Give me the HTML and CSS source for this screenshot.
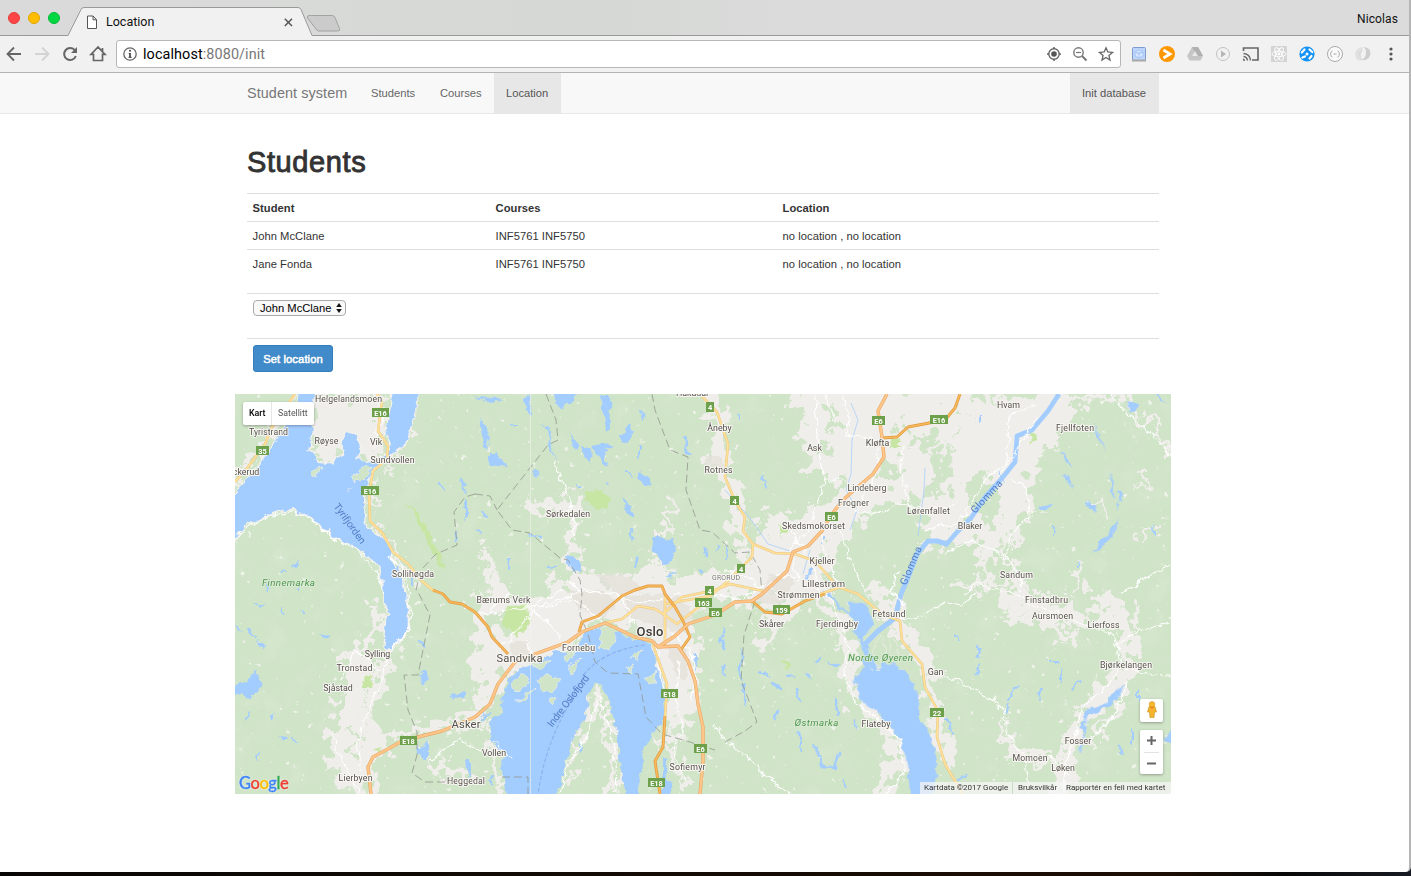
FILE: index.html
```html
<!DOCTYPE html>
<html lang="no">
<head>
<meta charset="utf-8">
<title>Location</title>
<link rel="stylesheet" href="styles.css">
</head>
<body>
<div class="window">
  <header class="tabbar">
    <div class="lights"><i class="red"></i><i class="amber"></i><i class="green"></i></div>
    <div class="tab">
      <svg class="tab-shape" width="280" height="36" viewBox="0 0 280 36"><path d="M0 35.5H4L17 9.5Q18 7.5 20 7.5H234Q236 7.500 237 9.500L248 35.500H280V36H0Z" fill="#f1f1f1"/><path d="M0 35.500H4L17 9.500Q18 7.500 20 7.500H234Q236 7.500 237 9.500L248 35.500H280" fill="none" stroke="#999"/><path d="M247.500 15.500H268Q270 15.500 271 17.500L275.500 28.500Q276.500 31 273.500 31H255Q253 31 252 29L243.500 18Q243 15.500 245 15.500Z" fill="#cbcbcb" stroke="#a2a2a2"/></svg>
      <div class="tab-content">
        <svg width="12" height="15" viewBox="0 0 12 15"><path d="M1.500 1H7L10.500 4.500V13.500H1.500ZM7 1V4.800H10.500" fill="#fff" stroke="#555"/></svg>
        <span>Location</span>
        <svg class="close" width="9" height="9" viewBox="0 0 9 9"><path d="M.8.800 8 8M8 .8.800 8" stroke="#555" stroke-width="1.500"/></svg>
      </div>
    </div>
    <span class="profile">Nicolas</span>
  </header>
  <div class="toolbar">
    <div class="nav-icons">
      <svg viewBox="0 0 28 28"><path d="M21 14H8M14 7.500 7.500 14 14 20.500" fill="none" stroke="#666" stroke-width="1.800"/></svg>
      <svg viewBox="0 0 28 28"><path d="M7 14H20M14 7.500 20.500 14 14 20.500" fill="none" stroke="#d3d3d3" stroke-width="1.800"/></svg>
      <svg viewBox="0 0 28 28"><path d="M19 10.500A6 6 0 1 0 19.800 16" fill="none" stroke="#666" stroke-width="2"/><path d="M21 7V13H15Z" fill="#666"/></svg>
      <svg viewBox="0 0 28 28"><path d="M14 7 7 14.300H9.500V20.500H18.500V14.300H21ZM18.500 8V11" fill="none" stroke="#666" stroke-width="1.700"/></svg>
    </div>
    <div class="address">
      <svg width="14" height="14" viewBox="0 0 14 14"><circle cx="7" cy="7" r="6.200" fill="none" stroke="#666" stroke-width="1.300"/><path d="M7 6V10.500" fill="none" stroke="#444" stroke-width="1.700"/><path d="M5.700 6.500H7M5.500 10.300H8.700" stroke="#444" stroke-width="1"/><circle cx="7" cy="3.800" r="1" fill="#444"/></svg>
      <span class="url">localhost<em>:8080/init</em></span>
      <div class="address-icons">
        <svg viewBox="0 0 26 26"><circle cx="13" cy="13" r="5.200" fill="none" stroke="#666" stroke-width="1.400"/><circle cx="13" cy="13" r="2.800" fill="#555"/><path d="M13 6V8M13 18V20M6 13H8M18 13H20" stroke="#666" stroke-width="1.500"/></svg>
        <svg viewBox="0 0 26 26"><circle cx="11.500" cy="11.500" r="4.700" fill="none" stroke="#777" stroke-width="1.400"/><path d="M15 15 19.500 19.500" stroke="#777" stroke-width="2"/><path d="M9 11.500H14" stroke="#777" stroke-width="1.200"/></svg>
        <svg viewBox="0 0 26 26"><path d="M13 6.800 14.800 11 19.500 11.400 15.900 14.400 17 19 13 16.500 9 19 10.100 14.400 6.500 11.400 11.200 11Z" fill="none" stroke="#666" stroke-width="1.300"/></svg>
      </div>
    </div>
    <div class="extensions">
      <svg viewBox="0 0 28 28"><rect x="7.500" y="7.500" width="13" height="13" rx="1" fill="#bdd5fb" stroke="#7f9dcb"/><path d="M7 20.500H21" stroke="#a7a7a7" stroke-width="2"/><path d="M14 10 18 12V16L14 18 10 16V12ZM10 12 14 14 18 12M14 14V18" fill="#d9e8ff" stroke="#9bbff2" stroke-width=".8"/></svg>
      <svg viewBox="0 0 28 28"><circle cx="14" cy="14" r="8" fill="#ff9800"/><path d="M10.500 10 17 14 10.500 18" fill="none" stroke="#fff" stroke-width="2.800"/></svg>
      <svg viewBox="0 0 28 28"><path d="M11 7H17L22 16 19.500 20.500H8.500L6 16Z" fill="#c6c6c6"/><path d="M11 7H17L22 16H16Z" fill="#b0b0b0"/><path d="M14 11 17 16H11Z" fill="#e8e8e8"/></svg>
      <svg viewBox="0 0 28 28"><circle cx="14" cy="14" r="6.500" fill="none" stroke="#c2c2c2"/><path d="M12 10.500 17 14 12 17.500Z" fill="#b5b5b5"/></svg>
      <svg viewBox="0 0 28 28"><path d="M6.500 11V8H21V20H15" fill="none" stroke="#666" stroke-width="1.600"/><path d="M6.500 13.500Q13 14 13.500 20.500M6.500 16.500Q10 17 10.500 20.500" fill="none" stroke="#666" stroke-width="1.400"/><path d="M6 18.500Q8 19 8.200 20.800H6Z" fill="#666"/></svg>
      <svg viewBox="0 0 28 28"><rect x="6" y="6" width="16" height="16" fill="#d4d4d4"/><g fill="none" stroke="#fff" stroke-width=".9"><ellipse cx="14" cy="14" rx="7" ry="2.700"/><ellipse cx="14" cy="14" rx="7" ry="2.700" transform="rotate(60 14 14)"/><ellipse cx="14" cy="14" rx="7" ry="2.700" transform="rotate(120 14 14)"/></g><circle cx="14" cy="14" r="1.400" fill="#fff"/></svg>
      <svg viewBox="0 0 28 28"><circle cx="14" cy="14" r="7.600" fill="#1492f5"/><circle cx="14" cy="14" r="1.500" fill="#fff"/><path d="M8.800 12.500 11.500 9.500M16.500 9.500 19.300 12M9.500 17.500 12 16.500M16.500 18.500 18.500 16" stroke="#fff" stroke-width="2.200" stroke-linecap="round"/></svg>
      <svg viewBox="0 0 28 28"><circle cx="14" cy="14" r="7.500" fill="#fafafa" stroke="#aaa"/><path d="M11.500 11Q10 11 10 12.500T9 14Q10 14 10 15.500T11.500 17M16.500 11Q18 11 18 12.500T19 14Q18 14 18 15.500T16.500 17M12.500 14H15.500" fill="none" stroke="#aaa"/></svg>
      <svg viewBox="0 0 28 28"><path d="M15 7Q7 7 6 14 7 20 11 21 7 14 15 7Z" fill="#e0e0e0"/><path d="M15 7Q22 8 21.500 14 20 21 12 20 17 18 17 13 17 9 15 7Z" fill="#cecece"/><path d="M13 10Q9 14 12 20" fill="none" stroke="#dadada" stroke-width="2"/></svg>
      <svg viewBox="0 0 28 28"><g fill="#555"><circle cx="14" cy="9" r="1.600"/><circle cx="14" cy="14" r="1.600"/><circle cx="14" cy="19" r="1.600"/></g></svg>
    </div>
  </div>
  <nav class="navbar">
    <div class="container nav-inner">
      <span class="brand">Student system</span>
      <a class="link-students">Students</a><a class="link-courses">Courses</a><a class="active">Location</a>
      <a class="active init">Init database</a>
    </div>
  </nav>
  <main class="container">
    <section class="content">
      <h1>Students</h1>
      <table>
        <colgroup><col class="c1"><col class="c2"><col></colgroup>
        <tr><th>Student</th><th>Courses</th><th>Location</th></tr>
        <tr><td>John McClane</td><td>INF5761 INF5750</td><td>no location , no location</td></tr>
        <tr><td>Jane Fonda</td><td>INF5761 INF5750</td><td>no location , no location</td></tr>
      </table>
      <div class="form-row select-row"><div class="select"><span>John McClane</span><svg width="6" height="10" viewBox="0 0 6 10"><path d="M3 0 5.800 4H.2ZM3 10 .2 6H5.800Z" fill="#111"/></svg></div></div>
      <div class="form-row"><button>Set location</button></div>
    </section>
    <div class="map">
<svg class="map-art" viewBox="235 394 936 400" width="936" height="400">
<defs>
  <filter id="rough" x="0" y="0" width="100%" height="100%"><feTurbulence type="fractalNoise" baseFrequency=".11" numOctaves="3" seed="4"/><feDisplacementMap in="SourceGraphic" scale="9" xChannelSelector="R" yChannelSelector="G"/></filter>
  <filter id="ragged" filterUnits="userSpaceOnUse" x="200" y="360" width="1000" height="460"><feTurbulence type="fractalNoise" baseFrequency=".075" numOctaves="4" seed="9"/><feDisplacementMap in="SourceGraphic" scale="42" xChannelSelector="R" yChannelSelector="G"/></filter>
  <filter id="specks" x="0" y="0" width="100%" height="100%"><feTurbulence type="fractalNoise" baseFrequency=".13" numOctaves="3" seed="21"/><feColorMatrix values="0 0 0 0 .93  0 0 0 0 .93  0 0 0 0 .89  10 0 0 0 -7.300"/></filter>
  <filter id="relief" x="0" y="0" width="100%" height="100%"><feTurbulence type="fractalNoise" baseFrequency=".035" numOctaves="4" seed="2"/><feColorMatrix values="0 0 0 0 .73  0 0 0 0 .84  0 0 0 0 .69  5 0 0 0 -2.800"/></filter>
  <path id="minor" d="M295 394 272 427 265 444 248 467 235 482M377 394 382 401 378 431 388 446 387 459 373 471 369 494 370 521 383 534 393 552 408 564 422 581 435 592M700 394 717 412 728 444 725 477 735 501 745 517 743 531 753 544 752 557 728 581 710 596 665 604M753 544 775 553 795 554 815 561 838 587 858 594 882 614 900 621 902 641 922 664 925 687 938 711 937 737 945 764 955 781 963 794M605 623 622 619 638 606 655 609 663 614 682 597 715 590 730 584 763 591M665 594V645M663 614 677 624 700 606M653 645 667 684 665 717M820 594 838 588"/>
  <path id="trunk" d="M882 438 897 437 908 427 945 420 955 408 960 394M752 601 765 612 782 614 805 601 825 594M433 590 443 594 450 602 462 604 475 612 488 627 492 637 508 654M579 632 582 622 598 616 622 596 635 590 648 586 662 586 665 594 675 607 683 621 690 637 680 651M665 716 663 747 655 761 660 794"/>
  <path id="motorway" d="M371 794 368 767 373 757 388 749 402 741 422 736 442 731 475 717 490 704 498 684 515 662 535 654 568 642 582 632 605 623 618 629 635 637 652 641 658 647 678 646 688 661 695 681 698 704 703 727 703 761 700 794M658 647 675 636 688 624 715 615 735 602 752 601 762 594 787 571 793 552 808 546 822 531 832 514 842 501 853 491 873 474 884 457 882 437 878 411 887 394"/>
</defs>
<rect x="235" y="394" width="936" height="400" fill="#d0e4c8"/>
<rect x="235" y="394" width="936" height="400" filter="url(#relief)" opacity=".3"/>
<rect x="235" y="394" width="936" height="400" filter="url(#specks)" opacity=".8"/>

<g filter="url(#ragged)" fill="#efeeea" stroke="#efeeea" stroke-linecap="round" stroke-linejoin="round">
  <g transform="translate(235 394) scale(.33333)">
    <path d="M240 0H460L440 180 350 190 270 210 225 170Z"/><path d="M180 0 90 150 0 260" fill="none" stroke-width="20"/>
    <path d="M530 60 480 180 410 230 400 390 470 480 530 560" fill="none" stroke-width="14"/>
  </g>
  <g transform="translate(475 394) scale(.33333)" fill="none">
    <path d="M150 342 210 330 290 330 300 430 290 500 330 560" stroke-width="27"/><path d="M30 470 40 550 90 600" stroke-width="35"/><path d="M580 330 600 420 550 400 540 500 590 520" stroke-width="18"/>
    <path d="M700 0 730 80 740 220 790 350 800 450" stroke-width="46"/>
    <path d="M260 590H420L540 555 600 590 720 570" stroke-width="75"/>
  </g>
  <g transform="translate(715 394) scale(.33333)">
    <path d="M230 10 240-20H740L780 60 650 170 650 300 720 420 620 470 440 370 350 460 330 600H-10L120 440 250 390 300 310 290 170Z"/>
    <path d="M160 390 280 430M450 350H700M290 0 300 200" fill="none" stroke-width="70"/>
  </g>
  <g transform="translate(945 394) scale(.33333)">
    <path d="M0 20 380 0 400 70 340 140 240 250 260 360 160 460 120 600 100 440 0 440Z"/>
    <path d="M390 0 550 20 620 90 675 180M210 330 190 450 230 600M400 510 380 600M20 570H260" fill="none" stroke-width="19"/>
    <path d="M560 280 610 250M580 410 650 400M450 310 490 370" fill="none" stroke-width="12"/>
  </g>
  <g transform="translate(235 594) scale(.33333)" fill="none">
    <path d="M395 30 430 90 390 160M470 170 400 330 370 460" stroke-width="28"/><path d="M360 180 380 260 330 360 310 470 370 600 420 440 350 340" stroke-width="62"/><path d="M410 470 510 410 720 380M590 510 700 550" stroke-width="28"/>
  </g>
  <g transform="translate(475 594) scale(.33333)">
    <path d="M0 0H700L660 230 680 340 590 440 550 270 530 140 390 70 270 190 100 250 45 340 0 360Z"/>
    <path d="M360 290 310 410 280 540M370 290 410 440 420 600M560 430 630 570M30 370 70 500 80 600" fill="none" stroke-width="22"/>
  </g>
  <g transform="translate(715 594) scale(.33333)" fill="none">
    <path d="M-10 0H260L190 80 150 150M310 0 370 80 410 180 400 290 500 370 560 500 490 600" stroke-width="40"/><path d="M490 0 560 100 640 220 650 310 690 500" stroke-width="43"/>
  </g>
  <g transform="translate(945 594) scale(.33333)" fill="none">
    <path d="M180 20 320 40 420 90 520 60 560 160 530 260 430 340 390 410 360 510 350 600" stroke-width="47"/><path d="M180 360 190 450 260 510 350 490M560 210 530 320 450 440" stroke-width="20"/><path d="M250 0 200 70 310 80 370 130M440 0 540 40" stroke-width="35"/>
  </g>
</g>

<g filter="url(#ragged)" fill="#d0e4c8">
  <path d="M805 480 825 475 842 480 835 498 815 505ZM795 404l12 5-5 15-12-5ZM829 410l17 8-8 15-12-8ZM888 460l13 3-9 20-12-6ZM925 425l14 10-12 15-12-12ZM970 477l23 5 10 23-20 20-15-12ZM872 509l25-15 27 14 5 32-40 25-22-24ZM895 424l12-4-3 12ZM745 530l12 7-10 14ZM492 620l16-9 6 15-18 11ZM691 612l15 5 4 40-13-5ZM825 440l10 5-7 16-9-8ZM955 410l12 6-9 10ZM938 470l10-8 5 12-8 6ZM950 560l12-6 6 12-14 4Z"/>
</g>
<g filter="url(#rough)" fill="#e5e1db" opacity=".8"><path d="M570 590h33l14 15-14 12-25-8ZM625 594h50l20 20-9 20-30-8-31-10ZM510 641h18v14h-18ZM669 645l18 5v30l-12-4ZM770 575l25 5-15 26-25-5ZM705 456h18v12h-18ZM595 575h35l10 15-25 5Z"/></g>
<g filter="url(#rough)" fill="#c8e6a3"><path d="M507 605 527 604 529 625 516 637 504 626ZM586 493 598 490 611 497 609 508 600 510 586 501ZM490 720 508 717 502 731 490 728ZM364 676 372 678 370 688 362 688ZM404 500q18 24 23 42l15 26 3-3-12-23Q425 516 404 500ZM780 525l8 5-8 6ZM891 439h8v8h-8ZM1030 433l7 2-6 9ZM780 660l13 5-6 3ZM373 750l10-3-3 6Z"/></g>

<g filter="url(#rough)" fill="#a3ccff">
  <g transform="translate(235 394) scale(.33333)">
    <path stroke="#f3f2ed" stroke-width="4" d="M190-10H245L240 20 235 80 225 170 250 205 290 210 325 175 308 145 340 112 370 120 383 150 365 190 405 205 440 185 465 155 452 110 462 60 475-10H548L540 70 525 120 500 165 455 193 415 225 388 290 390 350 395 400 440 430 470 470 475 500 500 540 510 600 520 630 520 705 475 765 445 765 458 660 450 620 445 590 430 520 400 490 350 455 300 435 230 370 160 345 90 370 30 395-10 450V310L15 280 60 225 130 130 180 40Z"/>
  </g>
  <g transform="translate(475 594) scale(.33333)">
    <path d="M75 310 110 240 180 210 240 170 290 180 330 120 385 95 440 120 480 140 530 150 545 220 575 290 570 350 560 390 530 420 500 480 490 620H455L440 520 420 380 400 310 360 262 340 310 330 370 290 440 270 520 240 620H90L80 520 85 480 50 440 45 380 80 350Z"/>
    <path d="M565 490 580 495 575 550 590 560 580 620 560 610ZM655 170l10 45-5 15-10-35Z"/>
  </g>
  <g transform="translate(715 594) scale(.33333)">
    <path d="M320-10 345 0 400 60 400 30 455 25 470 60 470 100 440 140 465 170 470 200 530 210 580 240 610 300 615 370 650 430 665 500 655 620H590L575 480 545 420 490 360 440 320 415 260 440 220 450 170 425 130 415 80Z"/>
  </g>
  <g transform="translate(945 594) scale(.33333)"><path d="M415 350 480 325 510 290 535 275 525 310 470 350 415 375ZM405 400 425 370 415 460 400 480 415 420ZM660 420 680 400V445L660 440Z"/></g>
  <g transform="translate(475 394) scale(.33333)"><path d="M375 0H405L408 100 390 110ZM235 0H310L300 20 270 25 265 45 245 30ZM435 125 465 85 475 110 465 150 440 145ZM355 155 380 148 420 155 390 165 385 185 407 225 360 180ZM315 160 350 165 348 210 330 180ZM285 115 310 155 300 170 290 150ZM38 180 60 180 98 222 40 215ZM530 435 550 428 570 440 600 435 600 470 580 515 560 510 550 480 530 465ZM270 490 290 490 320 515 320 530 295 530ZM480 485l12 0-5 30-10 0ZM620 135 635 130 635 155 650 180 640 190ZM495 235l25 10 5 25-10 10-20-25ZM442 310 475 360 470 370 450 345ZM0 0 20 10 80 15 60 30 5 10ZM145 10l15-5 10 60-15-20ZM10 70l20 20 15 40-8 40-10-20ZM200 95l25 5 15 105-15-50-5-50Z"/></g>
  <g transform="translate(945 394) scale(.33333)"><path d="M545 25 580 30 575 50 555 50ZM635 0 660 30 630 10ZM450 90 480 170 455 125ZM350 240 365 245 385 285ZM500 235 508 310 495 290ZM520 370 510 415 480 450 440 480 465 440 495 420ZM320 325 300 350 275 350ZM515 325l10 10-8 12ZM430 320l15 15 5 20-20-15Z"/></g>
  <g transform="translate(235 594) scale(.33333)"><path d="M-5 275 40 265 60 230 75 260 85 270 50 310-5 300ZM555 230l20 0 5 25-15 15-5-15ZM645 310l40-20 5 20-35 5ZM545 450l15 20 20-30 5 40-15 15-20-10ZM690 495l15 0 0 40-10 20ZM0 90l20 20-15 0ZM65 140l25 10-10 10ZM130 425l30 5-10 10ZM255 120l25 5-5 15ZM105 360l10 0-5 30Z"/></g>
</g>
<g filter="url(#rough)" fill="none" stroke="#a3ccff" stroke-linecap="round">
  <path stroke-width="2" d="M440 484l4 6M462 480l3 14M465 500v19M454 540l3-6M415 575l-2 7M399 565l-2 6M280 573l5-4M294 568l4-9M257 604l5 1M269 584v6M248 630l8 8M281 607l2 7M302 586l-4 3M245 720l5-7M257 760l3-6M293 737l4 5M301 611l3 3M511 423l5 2M509 560l-1 7M548 568l9-2M530 535l9 2M478 530l4 4M482 510l4 6M535 470l3 8M577 483l4 3M626 470l6 6M631 530l2 10M670 578l3-5M641 410l3 10M640 445v12M606 482l2 2M741 415l-2 6M763 475l3 14M726 546l2 13M740 422v-8M810 570l-2 10M824 537l-3 7M1000 472l5 7M980 414v8M1053 526v10M1085 503l7 5M1154 528l2 7M1118 492l3 10M1063 452l7 12M1080 560l-3 5M955 635l5 7M977 646l3 10M981 665l-6 10M1008 700l9-14M1005 714l4-9M1038 700l3-12M1049 660l11 3M1061 681v-13M1073 690l8-8M1138 690v12M945 720l9 14M958 778l9-4M1119 746l3 9M1132 730v12"/>
  <path stroke-width="2.500" d="M722 630v18M741 650v28M742 684l4 18M724 666v11M760 672l7 4M772 683l9 6M788 675l8 4M797 690l3 13M778 710l-4 10M836 700l1 15M829 662l8 5M799 732l3 20M815 745l8 20 13 4M842 780l4 8M820 660l-4 2M838 754l-4 13M856 720v8M806 674l3 5M580 745l2 6M705 550l2 7M700 570l3 3M719 545l-2 5M493 774l-3 8M482 719l6-5M420 640l4 6"/>
</g>
<g fill="none" stroke="#a3ccff" stroke-linejoin="round">
  <path d="M1059 394 1048 411 1032 430 1017 436 1015 462 1003 477 985 497 971 518 958 531 945 546" stroke-width="4.600"/>
  <path d="M947 544 937 541 928 541 917 554 907 580 901 594 895 618 878 631 865 644" stroke-width="5"/>
  <path d="M851 403 858 420 852 440 851 474 846 490 857 510 850 530M925 468 924 490 918 536M725 490 750 518 768 544 790 551M810 550 803 574" stroke-width=".9" opacity=".8"/>
</g>
<g filter="url(#rough)" fill="#d0e4c8" stroke="#f3f2ed" stroke-width=".6">
  <path d="M312 469l8-2-4 10-5-2ZM352 477l16-12 4 4-8 9-10 4ZM347 490l8-3M510 682l14-8 5 7-12 11ZM538 679l12-5 10 7-8 12-10-1ZM601 628l10-3 6 14-7 12-10-3ZM563 657l14-7-8 11ZM535 689l-8 10-10 1ZM630 655l13-6-5 12ZM625 667l8-3-2 9ZM565 670l15-12-7 17ZM582 714l4-4-1 6ZM644 678l13-6-3 12ZM548 700l10-4-6 8ZM530 665l20-6-8 8ZM660 685l6-5-2 10Z"/>
  <path d="M873 654l7-20 6 17-8 20ZM889 638l7 2 3 22-7-4ZM869 664l4 8M853 600l10-5"/>
</g>

<g fill="none" stroke="#fff" stroke-width="1.100" stroke-linejoin="round" filter="url(#rough)">
  <path d="M235 540 246 528 265 518 290 512 311 518 335 540 355 548 378 574 384 594M408 594 411 615 408 630 392 649 385 660 384 676 370 705 362 728 357 748 359 770M332 735 346 770 360 794M389 555 402 567 410 594M370 394 385 410 378 430 375 450"/>
  <path d="M563 590 540 600 522 625 500 650M480 615 550 604 580 592 620 594 635 625M545 608 575 600 600 620M490 610 510 594 545 620 562 640M617 594 635 604 655 602 680 592M595 692 601 700 610 730 615 760 616 794M598 700 585 740 568 762 560 794M670 630 690 650 695 680 691 700M680 660 675 700 683 730 673 750 685 780M655 640 663 690M553 460 570 500 575 540M567 580 582 590 600 592M525 640 535 660M494 740 510 760"/>
  <path d="M815 394 817 440 825 480 815 510 807 530 790 550M825 480 845 480 865 495 858 512 885 514 895 502 930 510 955 504M925 530 960 522 985 480 1007 462 1009 417 1035 405M1010 480 1026 486 1031 515 1014 530 1006 555 1020 575 1021 594M945 554 970 540 980 545 1010 560M842 394 850 420 845 435 885 440M1040 415 1020 445 1000 475M903 446 900 470 912 510M820 530 827 560 838 582M1110 394 1128 414 1150 432 1171 456M965 594 975 585 1005 590 1040 607 1085 624 1115 635 1120 665 1110 685 1080 710 1076 735 1065 765 1063 794"/>
  <path d="M715 594 740 600 772 582 780 600M725 570 755 580 760 594M825 590 842 625 849 650 844 675 855 703 880 720 900 740 904 775 885 794M715 725 725 742 740 750 765 775 790 794M900 620 920 617 945 602 960 605 974 594M945 675 960 682 985 695 1003 710 1008 735 1025 757 1030 794M1090 740 1115 715 1128 680M1115 665 1150 675 1171 676M1115 645 1140 630 1171 623M1050 757 1070 775M1171 564 1150 575 1120 594"/>
  <path d="M790 530 810 560 820 594M790 551 800 580 775 575M900 570 890 590 905 605M870 600 850 560 840 530M825 394 835 420M880 450 870 490M380 670 355 650 340 680M430 760 460 740 480 750"/>
</g>
<g fill="none" stroke="#92988e" stroke-width=".9" stroke-dasharray="8 4" opacity=".9">
  <path d="M546 394 556 420 558 440 548 445 497 510 512 530 530 533 560 558 568 560 580 580 582 594 580 615 588 634 595 662 608 673 638 674 646 717 662 734 690 742 715 750M475 494 490 496 497 510M475 494 465 497 454 512 457 545 436 554 421 570 416 590 419 594 430 615 425 640 418 675 404 675 408 710 417 732 417 755 412 773 425 782 450 782M652 394 655 410 670 450 688 457 686 490 700 530 712 532 735 553 750 552 760 570 762 594M755 601 744 635 741 680 757 722 745 731 725 742M502 777 528 777V794"/>
</g>
<path d="M645 645Q605 650 585 673C565 715 547 735 538 794" fill="none" stroke="#8eb2ef" stroke-width="1.200" stroke-dasharray="4 2"/>

<g fill="none" stroke-linejoin="round">
  <use href="#minor" stroke="#e9c480" stroke-width="2.600"/><use href="#minor" stroke="#ffe199" stroke-width="1.700"/>
  <use href="#trunk" stroke="#e09a3c" stroke-width="2.900"/><use href="#trunk" stroke="#f8b85c" stroke-width="1.600"/>
  <use href="#motorway" stroke="#e9a865" stroke-width="3.400"/><use href="#motorway" stroke="#ffc68a" stroke-width="2.200"/>
</g>
<path d="M530.500 394V794" stroke="#f4f4ef" stroke-width=".7" opacity=".85"/>

<g class="shields">
  <g fill="#6da04a"><rect x="372" y="408" width="17" height="9"/><rect x="256" y="446" width="13" height="9"/><rect x="361" y="486" width="18" height="9"/><rect x="706" y="402" width="8" height="10"/><rect x="730" y="496" width="9" height="9"/><rect x="737" y="564" width="8" height="9"/><rect x="705" y="586" width="9" height="9"/><rect x="872" y="416" width="13" height="9"/><rect x="930" y="415" width="18" height="9"/><rect x="825" y="512" width="13" height="9"/><rect x="695" y="598" width="17" height="9"/><rect x="709" y="608" width="13" height="9"/><rect x="773" y="605" width="17" height="9"/><rect x="661" y="689" width="17" height="9"/><rect x="694" y="744" width="13" height="9"/><rect x="648" y="778" width="17" height="9"/><rect x="400" y="736" width="17" height="9"/><rect x="930" y="708" width="14" height="9"/></g>
  <g class="shield-text"><text x="380.500" y="415.500">E16</text><text x="262.500" y="453.500">35</text><text x="370" y="493.500">E16</text><text x="710" y="410">4</text><text x="734.500" y="503.500">4</text><text x="741" y="571.500">4</text><text x="709.500" y="593.500">4</text><text x="878.500" y="423.500">E6</text><text x="939" y="422.500">E16</text><text x="831.500" y="519.500">E6</text><text x="703.500" y="605.500">163</text><text x="715.500" y="615.500">E6</text><text x="781.500" y="612.500">159</text><text x="669.500" y="696.500">E18</text><text x="700.500" y="751.500">E6</text><text x="656.500" y="785.500">E18</text><text x="408.500" y="743.500">E18</text><text x="937" y="715.500">22</text></g>
</g>
<g class="labels">
  <text x="348.500" y="401.500" textLength="67">Helgelandsmoen</text><text x="268.500" y="435" textLength="39">Tyristrand</text><text x="326.500" y="444" textLength="24">Røyse</text><text x="376" y="445">Vik</text><text x="392.500" y="462.500" textLength="44">Sundvollen</text><text x="246" y="475">ckerud</text><text x="413" y="576.500" textLength="42">Sollihøgda</text><text x="568" y="516.500" textLength="44">Sørkedalen</text><text x="692" y="395.500">Hakadal</text><text x="719.500" y="431">Åneby</text><text x="718.500" y="473" textLength="28">Rotnes</text><text x="814.500" y="451">Ask</text><text x="877.500" y="445.500">Kløfta</text><text x="867" y="490.500" textLength="39">Lindeberg</text><text x="853.500" y="506" textLength="31">Frogner</text><text x="928.500" y="513.500" textLength="43">Lørenfallet</text><text x="813.500" y="529" textLength="63">Skedsmokorset</text><text x="822" y="563.500" textLength="25">Kjeller</text><text x="823.500" y="586.500" class="mid" textLength="43">Lillestrøm</text><text x="798.500" y="598" textLength="42">Strømmen</text><text x="726" y="580" class="area" textLength="28">GRORUD</text><text x="1008.500" y="408" textLength="23">Hvam</text><text x="1075" y="430.500" textLength="38">Fjellfoten</text><text x="970" y="529">Blaker</text><text x="1016.500" y="578" textLength="33">Sandum</text><text x="503.500" y="602.500" textLength="54">Bærums Verk</text><text x="578.500" y="651" textLength="33">Fornebu</text><text x="519.500" y="662" class="town" textLength="46">Sandvika</text><text x="650" y="636" class="oslo" textLength="27">Oslo</text><text x="466" y="727.500" class="town" textLength="29">Asker</text><text x="494" y="756">Vollen</text><text x="466" y="783.500" textLength="38">Heggedal</text><text x="687.500" y="769.500" textLength="36">Sofiemyr</text><text x="377.500" y="657">Sylling</text><text x="354.500" y="670.500" textLength="36">Tronstad</text><text x="338" y="690.500">Sjåstad</text><text x="355.500" y="781" textLength="34">Lierbyen</text><text x="771.500" y="627">Skårer</text><text x="837" y="626.500" textLength="42">Fjerdingby</text><text x="889" y="617" textLength="33">Fetsund</text><text x="935.500" y="674.500">Gan</text><text x="876" y="727" textLength="29">Flateby</text><text x="1046.500" y="603" textLength="43">Finstadbru</text><text x="1052.500" y="618.500" textLength="41">Aursmoen</text><text x="1103.500" y="628" textLength="32">Lierfoss</text><text x="1126" y="668" textLength="52">Bjørkelangen</text><text x="1078" y="743.500">Fosser</text><text x="1030" y="761" textLength="35">Momoen</text><text x="1063" y="771">Løken</text>
</g>
<g class="nature"><text x="288.500" y="586" textLength="53">Finnemarka</text><text x="880.500" y="660.500" textLength="65">Nordre Øyeren</text><text x="816.500" y="726" textLength="44">Østmarka</text></g>
<g class="waters"><text transform="translate(347 525.500) rotate(54)" textLength="47">Tyrifjorden</text><text transform="translate(989 499) rotate(-47)" textLength="41">Glomma</text><text transform="translate(914 567) rotate(-67)" textLength="41">Glomma</text><text transform="translate(571 703) rotate(-53)" textLength="62">Indre Oslofjord</text></g>
</svg>
      <div class="map-type"><b>Kart</b><span>Satellitt</span></div>
      <div class="google"><i class="gb">G</i><i class="gr">o</i><i class="gy">o</i><i class="gb">g</i><i class="gg">l</i><i class="gr">e</i></div>
      <div class="pegman"><svg width="12" height="18" viewBox="0 0 12 18"><path d="M3 5.500H9L10.500 11H8.500L8 16.500H4L3.500 11H1.500Z" fill="#f5b52a" stroke="#c98d1d" stroke-width=".6"/><circle cx="6" cy="3.300" r="2.800" fill="#f8b92c" stroke="#c98d1d" stroke-width=".5"/><path d="M4 6H8L6 8Z" fill="#e8792b"/></svg></div>
      <div class="zoom"><span><svg width="9" height="9"><path d="M4.500 0V9M0 4.500H9" stroke="#666" stroke-width="2"/></svg></span><span><svg width="9" height="9"><path d="M0 4.500H9" stroke="#666" stroke-width="2"/></svg></span></div>
      <div class="legal"><span>Kartdata ©2017 Google</span><span>Bruksvilkår</span><span>Rapportér en feil med kartet</span></div>
    </div>
  </main>
</div>
</body>
</html>
```
FILE: styles.css
```css
* { box-sizing: border-box; }
body { margin: 0; height: 876px; overflow: hidden; background: linear-gradient(90deg, #080604, #1c0e04 83%, #080808 91%, #171a22); }
svg { display: block; flex: none; }
.window { height: 872px; width: 1411px; background: #fff; border-right: 2px solid #b5b5b5; border-radius: 0 0 5px 0; font-family: "Liberation Sans", Arial, sans-serif; font-size: 11.2px; color: #333; }
.tabbar { height: 36px; display: flex; background: linear-gradient(90deg, #dadada, #d5d8d5 43%, #dbdbdb 58%); border-bottom: 1px solid #999; font-family: Roboto, sans-serif; color: #111; }
.lights { width: 64px; padding: 12px 0 0 8px; display: flex; gap: 8px; }
.lights i { width: 12px; height: 12px; border-radius: 50%; }
.red { background: #ff4545; border: 1px solid #e33b3b; }
.amber { background: #ffbd00; border: 1px solid #e2a500; }
.green { background: #00d742; border: 1px solid #00bc35; }
.tab { width: 280px; height: 36px; display: grid; }
.tab > * { grid-area: 1 / 1; }
.tab-content { display: flex; align-items: center; padding: 8px 0 0 22px; height: 36px; font-size: 12.5px; }
.tab-content span { width: 178px; margin-left: 8px; padding-bottom: 2px; }
.profile { margin: 12px 11px 0 auto; font-size: 12px; letter-spacing: .1px; }
.toolbar { height: 37px; display: flex; align-items: center; background: #f1f1f1; border-bottom: 1px solid #b3b3b3; }
.nav-icons { display: flex; width: 116px; }
.nav-icons svg { width: 28px; height: 28px; }
.address { width: 1005px; height: 28px; border: 1px solid #b6b6b6; border-radius: 3px; background: #fff; display: flex; align-items: center; padding-left: 6px; }
.url { margin-left: 6px; font: 14.400px Roboto, sans-serif; letter-spacing: .1px; color: #000; }
.url em { font-style: normal; color: #777; }
.address-icons { display: flex; margin: 0 1px 0 auto; }
.address-icons svg { width: 26px; height: 26px; }
.extensions { display: flex; margin-left: 4px; }
.extensions svg { width: 28px; height: 28px; }
.navbar { height: 41px; background: #f8f8f8; border-bottom: 1px solid #e7e7e7; }
.container { width: 936px; margin-left: 235px; }
.nav-inner { display: flex; height: 40px; line-height: 40px; padding: 0 12px; color: #666; }
.brand { width: 112px; font-size: 14.4px; letter-spacing: .08px; color: #777; white-space: nowrap; }
.nav-inner a { padding: 0 12px; }
.nav-inner .link-students { width: 69px; }
.nav-inner .link-courses { width: 66px; }
.nav-inner .active { width: 67px; background: #e7e7e7; color: #555; white-space: nowrap; }
.nav-inner .init { width: 89px; margin-left: auto; }
.content { height: 280px; padding: 31px 12px 0; }
h1 { margin: 0 0 15px; height: 33px; line-height: 34px; font-size: 29px; font-weight: normal; letter-spacing: .6px; -webkit-text-stroke: .9px #333; }
table { width: 912px; border-collapse: collapse; table-layout: fixed; margin-bottom: 15px; }
.c1 { width: 243px; }
.c2 { width: 287px; }
tr { height: 28px; border-top: 1px solid #ddd; }
th, td { padding: 0 5.600px; text-align: left; letter-spacing: .03px; }
.form-row { border-top: 1px solid #ddd; padding: 6px 6px 0; height: 45px; }
.select { width: 93px; height: 16px; display: flex; align-items: center; justify-content: space-between; padding: 0 3px 0 6px; border: 1px solid #aaa; border-radius: 4px; background: #f9f9f9; color: #000; white-space: nowrap; }
button { display: block; width: 80px; height: 27px; padding: 1px 0 0; border: 1px solid #357ebd; border-radius: 3px; background: #428bca; color: #fff; font: 11.200px "Liberation Sans", Arial, sans-serif; letter-spacing: .1px; -webkit-text-stroke: .5px #fff; }
.map { position: relative; width: 936px; height: 400px; overflow: hidden; font-family: Roboto, sans-serif; }
.labels text, .nature text, .waters text { text-anchor: middle; font: 8.800px Roboto, sans-serif; }
.labels text { fill: #55504b; stroke: #f7f6f2; stroke-width: 2px; stroke-linejoin: round; paint-order: stroke; }
.labels .mid { font-size: 9.500px; }
.labels .town { font-size: 11.200px; }
.labels .oslo { font-size: 13px; font-weight: 500; fill: #3e3b38; }
.labels .area { font-size: 7px; fill: #777; }
.nature text { font-size: 9.800px; font-style: italic; fill: #4f9650; stroke: #dcebd5; stroke-width: 1.500px; paint-order: stroke; }
.waters text { font-size: 10.200px; fill: #527fc5; }
.shield-text text { fill: #fff; text-anchor: middle; font: bold 7.400px Roboto, sans-serif; }
.map-type { position: absolute; left: 8px; top: 8px; display: flex; width: 71px; height: 23px; line-height: 23px; background: #fff; border-radius: 2px; box-shadow: 0 1px 3px rgba(0,0,0,.3); font-size: 8.800px; color: #555; }
.map-type b { width: 29px; padding-left: 6px; border-right: 1px solid #e6e6e6; font-weight: 500; color: #000; }
.map-type span { padding-left: 6px; }
.google { position: absolute; left: 4px; top: 378px; display: flex; font: 500 16.500px/22px Lato, sans-serif; letter-spacing: -.5px; text-shadow: 0 0 1px #fff, 0 0 2px #fff; -webkit-text-stroke: .4px; }
.google i { font-style: normal; }
.gb { color: #4285f4; } .gr { color: #ea4335; } .gy { color: #fbbc05; } .gg { color: #34a853; }
.pegman, .zoom { position: absolute; left: 905px; width: 23px; background: #fff; border-radius: 2px; box-shadow: 0 1px 3px rgba(0,0,0,.3); }
.pegman { top: 305px; height: 23px; display: grid; place-items: center; padding-bottom: 2px; }
.zoom { top: 336px; height: 44px; }
.zoom span { height: 22px; display: grid; place-items: center; padding-bottom: 2px; }
.zoom span + span { margin: 0 4px; border-top: 1px solid #e3e3e3; padding-bottom: 1px; }
.legal { position: absolute; right: 0; bottom: 0; display: flex; width: 251px; height: 12px; line-height: 12px; padding-left: 4px; background: rgba(245,245,245,.75); font-size: 8px; color: #333; white-space: nowrap; }
.legal span:nth-child(1) { width: 89px; border-right: 1px solid #cbdac5; }
.legal span:nth-child(2) { width: 53px; padding-left: 5px; }
```
